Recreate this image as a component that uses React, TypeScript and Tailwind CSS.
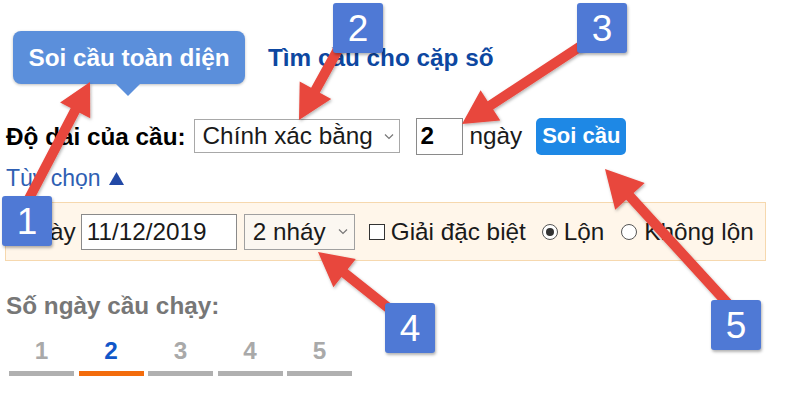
import React from "react";

type P = [number, number];

function arrowPoints(tail: P, tip: P, hl: number, hw: number, sw: number) {
  const dx = tip[0] - tail[0];
  const dy = tip[1] - tail[1];
  const len = Math.hypot(dx, dy);
  const ux = dx / len;
  const uy = dy / len;
  const nx = -uy;
  const ny = ux;
  const bx = tip[0] - ux * hl;
  const by = tip[1] - uy * hl;
  const pts: P[] = [
    [tail[0] + (nx * sw) / 2, tail[1] + (ny * sw) / 2],
    [bx + (nx * sw) / 2, by + (ny * sw) / 2],
    [bx + (nx * hw) / 2, by + (ny * hw) / 2],
    tip,
    [bx - (nx * hw) / 2, by - (ny * hw) / 2],
    [bx - (nx * sw) / 2, by - (ny * sw) / 2],
    [tail[0] - (nx * sw) / 2, tail[1] - (ny * sw) / 2],
  ];
  return pts.map((p) => p.map((v) => v.toFixed(1)).join(",")).join(" ");
}

const arrows: { tail: P; tip: P; hl: number; hw: number; sw: number }[] = [
  { tail: [22, 212], tip: [90, 82], hl: 32, hw: 34, sw: 10 },
  { tail: [341, 44], tip: [299, 120], hl: 34, hw: 36, sw: 10 },
  { tail: [584, 44], tip: [462, 124], hl: 34, hw: 36, sw: 10 },
  { tail: [396, 314], tip: [318, 252], hl: 34, hw: 36, sw: 10 },
  { tail: [730, 306], tip: [605, 169], hl: 37, hw: 40, sw: 10 },
];

const badges = [
  { n: "1", x: 2, y: 196 },
  { n: "2", x: 333, y: 3 },
  { n: "3", x: 577, y: 3 },
  { n: "4", x: 385, y: 303 },
  { n: "5", x: 711, y: 300 },
];

function Chevron() {
  return (
    <svg width="10" height="7" viewBox="0 0 10 7" className="shrink-0">
      <polyline points="1,1.5 5,5.5 9,1.5" fill="none" stroke="#777" strokeWidth="1.2" />
    </svg>
  );
}

export default function App() {
  const tabs = ["1", "2", "3", "4", "5"];
  return (
    <div className="relative w-[800px] h-[400px] overflow-hidden bg-white font-['Liberation_Sans',Arial,sans-serif] text-[24.3px] leading-[28px] text-[#1a1a1a]">
      <div className="pl-[6px] pt-[31px]">
        {/* header row */}
        <div className="flex items-center h-[53px]">
          <div className="relative ml-[7px] flex h-[53px] w-[232px] items-center justify-center rounded-[8px] bg-[#5b8fdb] font-bold text-white shadow-[0_1px_3px_rgba(0,0,0,0.25)]">
            Soi cầu toàn diện
            <span className="absolute left-[103px] top-full h-0 w-0 border-x-[12px] border-t-[12px] border-x-transparent border-t-[#5b8fdb]" />
          </div>
          <div className="ml-[23px] font-bold text-[#0d47a1]">Tìm cầu cho cặp số</div>
        </div>

        {/* length row */}
        <div className="mt-[33px] flex h-[38px] items-center">
          <span className="pt-[2px] font-bold text-black">Độ dài của cầu:</span>
          <div className="ml-[8px] flex h-[34px] w-[206px] items-center justify-between border border-[#a8a8a8] pl-[8px] pr-[5px]">
            <span>Chính xác bằng</span>
            <Chevron />
          </div>
          <div className="ml-[16px] flex h-[37px] w-[47px] items-center border border-[#8a8a8a] pl-[4px] font-bold text-black">
            2
          </div>
          <span className="ml-[7px]">ngày</span>
          <button className="ml-[14px] flex h-[37px] w-[90px] items-center justify-center rounded-[5px] bg-[#1e88e5] text-[22px] font-bold text-white">
            Soi cầu
          </button>
        </div>

        {/* options toggle */}
        <div className="mt-[9px] flex items-center text-[23px] text-[#2f5fb3]">
          <span>Tùy chọn</span>
          <svg width="17" height="15" viewBox="0 0 17 15" className="ml-[7px]">
            <polygon points="8.5,1 16,14 1,14" fill="#2249a6" />
          </svg>
        </div>

        {/* options panel */}
        <div className="-ml-[1px] mt-[10px] flex h-[59px] w-[761px] items-center border border-[#f6d8ae] bg-[#fff6ea] pl-[13px]">
          <span>Ngày</span>
          <div className="ml-[5px] flex h-[36px] w-[156px] items-center border border-[#8a8a8a] bg-white pl-[5px]">
            11/12/2019
          </div>
          <div className="ml-[7px] flex h-[36px] w-[111px] items-center justify-between border border-[#a0a0a0] bg-[#fbf7f1] pl-[8px] pr-[6px]">
            <span>2 nháy</span>
            <Chevron />
          </div>
          <span className="ml-[14px] h-[16px] w-[16px] border-[1.5px] border-[#333] bg-white" />
          <span className="ml-[6px]">Giải đặc biệt</span>
          <span className="ml-[16px] flex h-[16px] w-[16px] items-center justify-center rounded-full border-[1.5px] border-[#555] bg-white">
            <span className="h-[8px] w-[8px] rounded-full bg-[#333]" />
          </span>
          <span className="ml-[6px]">Lộn</span>
          <span className="ml-[17px] h-[16px] w-[16px] rounded-full border-[1.5px] border-[#555] bg-white" />
          <span className="ml-[7px]">Không lộn</span>
        </div>

        {/* days running */}
        <div className="mt-[31px] font-bold text-[#777]">Số ngày cầu chạy:</div>
        <div className="ml-[3px] mt-[17px] flex gap-[4.5px]">
          {tabs.map((t) => {
            const active = t === "2";
            return (
              <div key={t} className="flex w-[65px] flex-col items-center">
                <span className={active ? "font-bold text-[#1157c9]" : "font-bold text-[#a9a9a9]"}>{t}</span>
                <span className={active ? "mt-[6px] h-[5px] w-full bg-[#f36c0c]" : "mt-[6px] h-[5px] w-full bg-[#b0b0b0]"} />
              </div>
            );
          })}
        </div>
      </div>

      {/* annotation arrows */}
      <svg className="pointer-events-none absolute left-0 top-0" width="800" height="400" viewBox="0 0 800 400">
        <defs>
          <filter id="sh" x="-20%" y="-20%" width="140%" height="140%">
            <feDropShadow dx="1" dy="1.5" stdDeviation="1.5" floodColor="#000" floodOpacity="0.3" />
          </filter>
        </defs>
        {arrows.map((a, i) => (
          <polygon key={i} points={arrowPoints(a.tail, a.tip, a.hl, a.hw, a.sw)} fill="#e8463c" filter="url(#sh)" />
        ))}
      </svg>

      {/* badges */}
      {badges.map((b) => (
        <div
          key={b.n}
          className="absolute flex h-[50px] w-[50px] items-center justify-center rounded-[3px] bg-[#4f79d5] text-[37px] leading-none text-white shadow-[1px_2px_3px_rgba(0,0,0,0.3)]"
          style={{ left: b.x, top: b.y }}
        >
          {b.n}
        </div>
      ))}
    </div>
  );
}
